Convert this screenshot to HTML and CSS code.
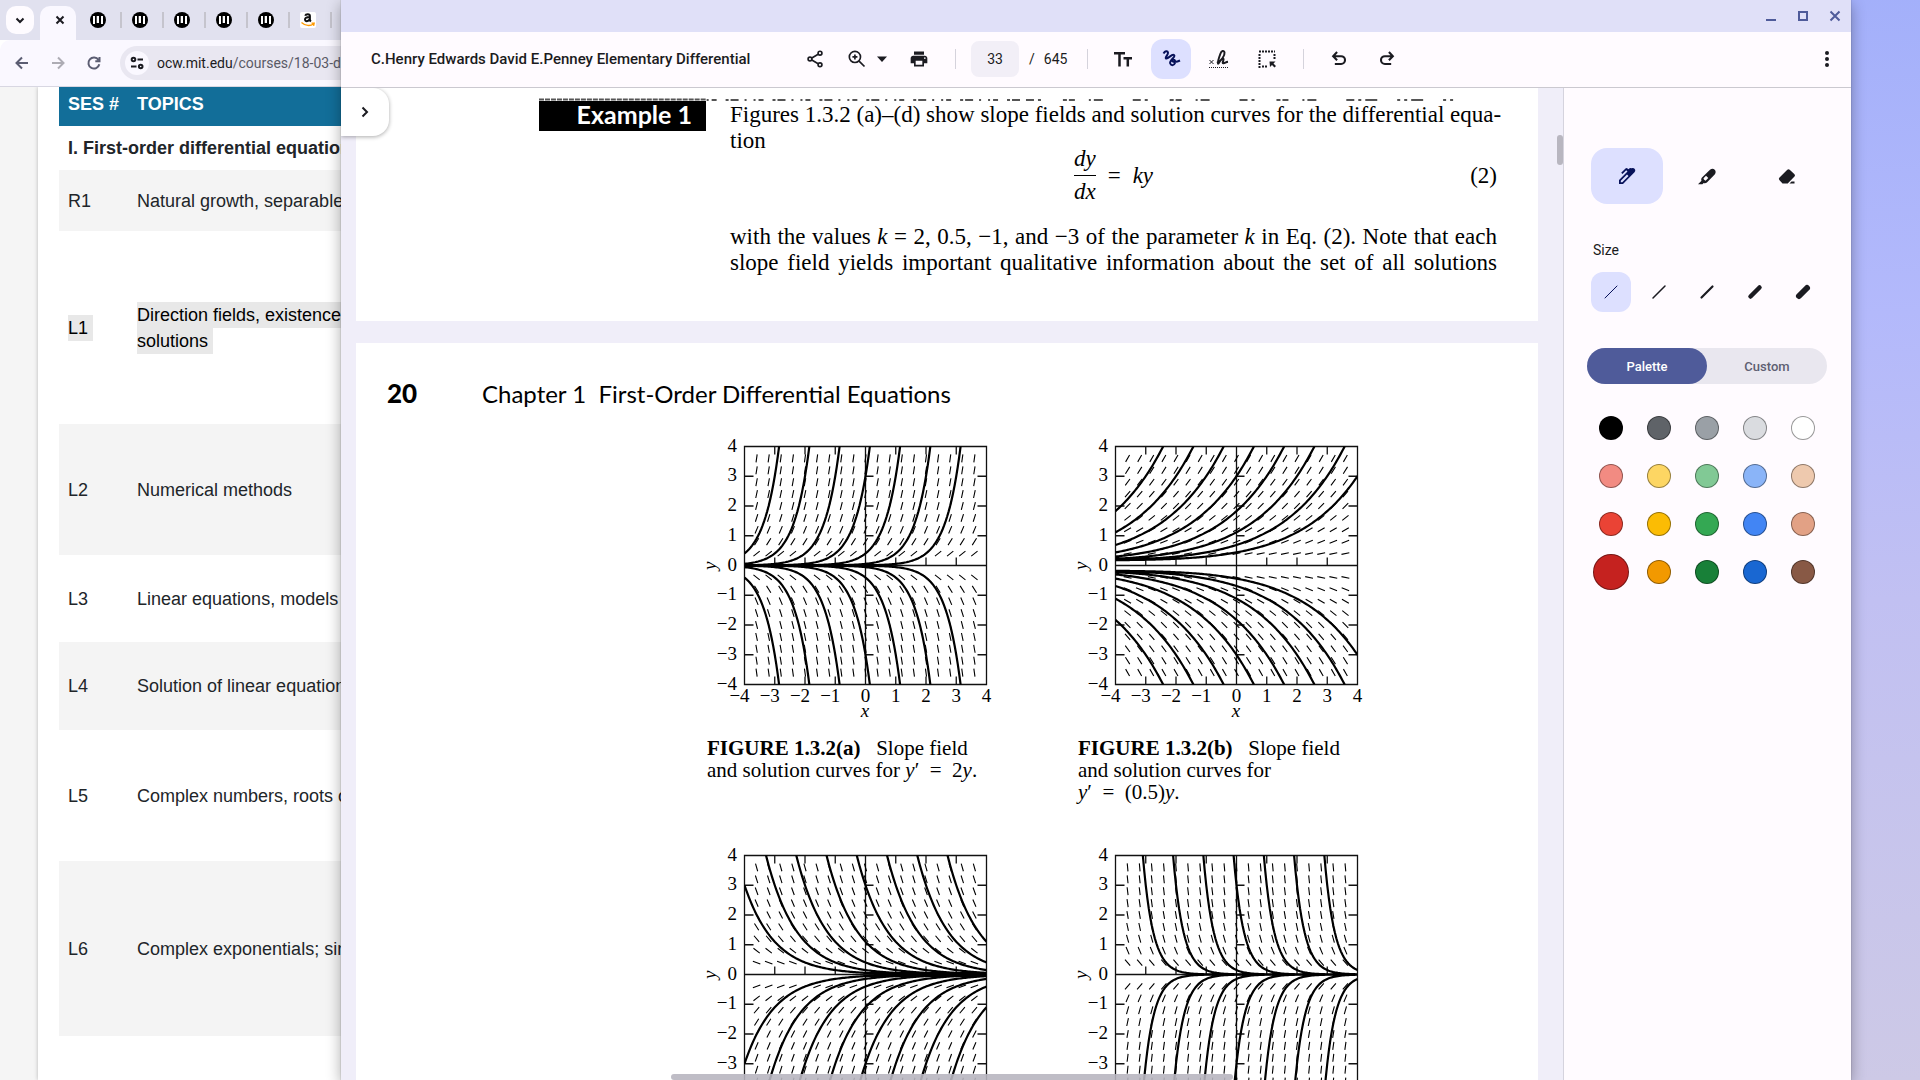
FILE: index.html
```html
<!DOCTYPE html>
<html lang="en">
<head>
<meta charset="utf-8">
<title>Desktop</title>
<link rel="stylesheet" href="styles.css">
</head>
<body>
<svg class="defs" aria-hidden="true">
  <symbol id="mit" viewBox="0 0 16 16"><circle cx="8" cy="8" r="8"/><path fill="#fff" d="M3 4h2v8H3zM6 4h1v7H6zM7 4h2v7H7zM11 4h2v8h-2z"/><path d="M6 4h.7v8H6zM9 4h.7v8H9z"/></symbol>
  <symbol id="amazon" viewBox="0 0 16 16"><rect width="16" height="16" rx="2" fill="#fff"/><path fill="none" stroke="#111" stroke-width="2" d="M5.200 3.700C5.800 1.800 9.900 1.600 9.900 4v3.500c0 .9.400 1.400 1 1.900M9.800 5.100C6.700 5.100 5 6 5 7.600c0 2 3.200 2.300 4.800-.6"/><path fill="none" stroke="#f90" stroke-width="1.300" d="M1.500 10.500c4 3.700 9 3.700 12 1.400M11.500 11.200h2.700l-.6 2.600"/></symbol>
</svg>
<div class="desktop">
  <section class="browser" aria-label="Browser">
    <div class="tabs">
      <button class="tab-search" aria-label="Search tabs"><svg viewBox="0 0 16 16"><path class="line" d="M4.500 6.500 8 10l3.500-3.500"/></svg></button>
      <div class="tab-active"><button aria-label="Close tab"><svg viewBox="0 0 16 16"><path class="line" d="m4.500 4.500 7 7m0-7-7 7"/></svg></button></div>
      <button class="tab" aria-label="MIT tab"><svg><use href="#mit"/></svg></button>
      <button class="tab" aria-label="MIT tab"><svg><use href="#mit"/></svg></button>
      <button class="tab" aria-label="MIT tab"><svg><use href="#mit"/></svg></button>
      <button class="tab" aria-label="MIT tab"><svg><use href="#mit"/></svg></button>
      <button class="tab" aria-label="MIT tab"><svg><use href="#mit"/></svg></button>
      <button class="tab" aria-label="Amazon tab"><svg><use href="#amazon"/></svg></button>
    </div>
    <div class="nav">
      <button aria-label="Back"><svg viewBox="0 0 16 16"><path class="line" d="M14 8H3M8 2.500 2.500 8 8 13.500"/></svg></button>
      <button aria-label="Forward" class="off"><svg viewBox="0 0 16 16"><path class="line" d="M2 8h11M8 2.500 13.500 8 8 13.500"/></svg></button>
      <button aria-label="Reload"><svg viewBox="0 0 16 16"><path class="line" d="M13.300 9.300A5.500 5.500 0 1 1 12.500 5M13.500 2v4.200H9.300"/></svg></button>
      <div class="omnibox">
        <span class="site"><svg viewBox="0 0 16 16"><path class="line" d="M8.500 4.500H14M2 11.500h5.500"/><circle class="line" cx="4.500" cy="4.500" r="1.800"/><circle class="line" cx="11.700" cy="11.500" r="1.800"/></svg></span>
        <span class="url">ocw.mit.edu<span>/courses/18-03-differential-equations</span></span>
      </div>
    </div>
    <div class="web">
      <div class="card">
        <table class="syllabus">
          <thead><tr><th scope="col">SES #</th><th scope="col">TOPICS</th></tr></thead>
          <tbody>
            <tr class="h-section"><th colspan="2" scope="colgroup">I. First-order differential equations</th></tr>
            <tr class="h-60 alt"><td>R1</td><td>Natural growth, separable equations</td></tr>
            <tr class="h-193"><td><span class="sel">L1</span></td><td><span class="sel">Direction fields, existence and uniqueness of</span><br><span class="sel">solutions</span></td></tr>
            <tr class="h-131 alt"><td>L2</td><td>Numerical methods</td></tr>
            <tr class="h-87"><td>L3</td><td>Linear equations, models</td></tr>
            <tr class="h-88 alt"><td>L4</td><td>Solution of linear equations</td></tr>
            <tr class="h-131"><td>L5</td><td>Complex numbers, roots of unity</td></tr>
            <tr class="h-175 alt"><td>L6</td><td>Complex exponentials; sinusoids</td></tr>
          </tbody>
        </table>
      </div>
    </div>
  </section>

  <section class="reader" aria-label="Document viewer">
    <header class="titlebar">
      <button aria-label="Minimize"><svg viewBox="0 0 12 12"><path d="M1 10h10"/></svg></button>
      <button aria-label="Maximize"><svg viewBox="0 0 12 12"><path d="M2 2h8v8H2z"/></svg></button>
      <button aria-label="Close"><svg viewBox="0 0 12 12"><path d="m1.500 1.500 9 9m0-9-9 9"/></svg></button>
    </header>
    <div class="toolbar">
      <h1>C.Henry Edwards David E.Penney Elementary Differential</h1>
      <button class="tool" aria-label="Share"><svg viewBox="0 0 24 24"><g class="s2"><circle cx="18" cy="5" r="2.300"/><circle cx="6" cy="12" r="2.300"/><circle cx="18" cy="19" r="2.300"/><path d="m8.200 10.800 7.600-4.500M8.200 13.200l7.600 4.500"/></g></svg></button>
      <button class="tool zoom" aria-label="Zoom"><svg viewBox="0 0 24 24"><g class="s2"><circle cx="9.500" cy="9.500" r="6.700"/><path d="m14.500 14.500 6.500 6.500M9.500 6.500v6M6.500 9.500h6"/></g></svg><svg viewBox="0 0 20 20"><path d="M5 7.500h10l-5 5.500z"/></svg></button>
      <button class="tool" aria-label="Print"><svg viewBox="0 0 24 24"><path d="M19 8H5c-1.660 0-3 1.340-3 3v6h4v4h12v-4h4v-6c0-1.660-1.340-3-3-3zm-3 11H8v-5h8v5zm3-7c-.55 0-1-.45-1-1s.45-1 1-1 1 .45 1 1-.45 1-1 1zm-1-9H6v4h12V3z"/></svg></button>
      <i class="sep"></i>
      <input class="page-no" aria-label="Page number" value="33"><span class="slash">/</span><span class="count">645</span>
      <i class="sep"></i>
      <div class="group">
        <button class="tool" aria-label="Text"><svg viewBox="0 0 20 20"><path class="s3" d="M1 4.200h11M6.500 4v13.500M10.500 9.200H19M14.800 9v8.500"/></svg></button>
        <button class="tool on" aria-label="Draw"><svg viewBox="0 0 20 20"><path class="s2" d="M2.500 4.500C4 2 6.500 1.500 7 3.500S3 9.500 5.500 9.500c2.200 0 5.500-5 7.500-3.500 2.200 1.800-5 5.500-3.800 8.500.8 2 3.800 2.500 4.800-.5.800-2.500-.5-3.500-2-3-1.500.6-.5 2.200 1.500 2 2-.2 3.500-.5 5.500-1.500"/></svg></button>
        <button class="tool" aria-label="Sign"><svg viewBox="0 0 20 20"><path class="s1" d="m.5 11 4 4m0-4-4 4"/><path class="s2" d="M8 14c4-2 8-7 7.500-10.500C15 1 12.500 1.800 11.500 4.500 10 8.500 8.500 13 9 14.500c.5 1 3-5.500 5-5 1.800.6-1.500 4.500.2 4.800 1.500.3 2.500-1.200 4.800-1.500"/><path class="dots" d="M0 18.500h20"/></svg></button>
        <button class="tool" aria-label="Select area"><svg viewBox="0 0 20 20"><path class="dots2" d="M2 2.500h16M2.500 5v14M17.500 5v5M5 17.500h6"/><path d="M12.500 12.500h6l-2 2 2.500 2.500-1.500 1.500-2.500-2.500-2 2z"/></svg></button>
      </div>
      <i class="sep"></i>
      <div class="group">
        <button class="tool" aria-label="Undo"><svg viewBox="0 0 24 24"><path class="s3" d="M7 18h7.500a4.700 4.700 0 0 0 0-9.400H5M9.700 3.700 5 8.600l4.700 4.900"/></svg></button>
        <button class="tool" aria-label="Redo"><svg viewBox="0 0 24 24"><path class="s3" d="M17 18H9.500a4.700 4.700 0 0 1 0-9.400H19M14.300 3.700 19 8.600l-4.700 4.900"/></svg></button>
      </div>
      <button class="tool more" aria-label="More options"><svg viewBox="0 0 20 20"><circle cx="10" cy="4" r="2"/><circle cx="10" cy="10" r="2"/><circle cx="10" cy="16" r="2"/></svg></button>
    </div>
    <div class="body">
      <main class="viewer">
        <button class="expand" aria-label="Show thumbnails"><svg viewBox="0 0 16 16"><path class="s2" d="m5.500 3.500 4.500 4.500-4.500 4.500"/></svg></button>
        <article class="sheet first">
          <svg class="torn" viewBox="0 0 960 3" preserveAspectRatio="none" aria-hidden="true"><path d="M0 1.500h168" stroke-dasharray="5 1"/><path d="M168 2h320" stroke-dasharray="2 3 5 9 3 2 8 6 2 7"/><path d="M488 2h340" stroke-dasharray="8 4 3 22 4 2 6 14 2 3 9 30"/><path d="M828 2h88" stroke-dasharray="12 20 3 4 3 4"/></svg>
          <div class="example">
            <h2>Example 1</h2>
            <div class="prose">
              <p>Figures 1.3.2 (a)–(d) show slope fields and solution curves for the differential equa-</p>
              <p class="last">tion</p>
              <div class="equation">
                <span></span>
                <span class="formula"><span class="frac"><i>dy</i><i>dx</i></span> = <i>ky</i></span>
                <span class="num">(2)</span>
              </div>
              <p>with the values <i>k</i> = 2, 0.5, −1, and −3 of the parameter <i>k</i> in Eq. (2). Note that each</p>
              <p>slope field yields important qualitative information about the set of all solutions</p>
            </div>
          </div>
        </article>
        <article class="sheet second">
          <div class="running"><b>20</b><span>Chapter 1&nbsp; First-Order Differential Equations</span></div>
          <div class="figures">
            <figure><svg class="plot" data-k="2" data-from="-3" data-to="3" data-floor="0" role="img" aria-label="Slope field a"></svg>
              <figcaption><b>FIGURE 1.3.2(a)</b>&ensp; Slope field<br>and solution curves for <i>y</i>′ &nbsp;=&nbsp; 2<i>y</i>.</figcaption></figure>
            <figure><svg class="plot" data-k="0.5" data-from="-3" data-to="4" data-floor="0.17" role="img" aria-label="Slope field b"></svg>
              <figcaption><b>FIGURE 1.3.2(b)</b>&ensp; Slope field<br>and solution curves for<br><i>y</i>′ &nbsp;=&nbsp; (0.5)<i>y</i>.</figcaption></figure>
            <figure><svg class="plot" data-k="-1" data-from="-4" data-to="3" data-floor="0" role="img" aria-label="Slope field c"></svg></figure>
            <figure><svg class="plot" data-k="-3" data-from="-3" data-to="3" data-floor="0" role="img" aria-label="Slope field d"></svg></figure>
          </div>
        </article>
        <i class="thumb-v"></i><i class="thumb-h"></i>
      </main>
      <aside class="panel">
        <div class="pens">
          <button class="on" aria-label="Pen"><svg viewBox="0 0 20 20"><path fill-rule="evenodd" d="M2 18v-4l8.500-8.500L9.200 4.200 5.500 8 4.200 6.700l4.300-4.300q1-.8 2 0l1 .9.700-.7q1-1 2-.3L16 2q1.500 0 2.200 1.800.4 1.400-.7 2.400L6 18zM3.800 16.200h1.500L11.500 10 10 8.500l-6.200 6.200z"/></svg></button>
          <button aria-label="Highlighter"><svg viewBox="0 0 20 20"><path fill-rule="evenodd" d="M1 18.300 4.500 14.800c-.5-1-.3-2.300.5-3.200l8-7.800q2.700-1.900 4.700 0 1.900 2.100 0 4.700l-7.800 8q-1.600 1.300-3.200.5l-1.300 1.300zM9 9.800 6.500 12.300q-.2 1 2 2.500l2.800-2.700z"/></svg></button>
          <button aria-label="Eraser"><svg viewBox="0 0 20 20"><path d="M5.500 17.500 2.300 14q-.8-1.200 0-2.200l8-8q1.200-.9 2.400 0l4.800 4.500q1 1.200 0 2.300l-6.800 6.900zM12.500 17.500l2-2H17.500v2z"/></svg></button>
        </div>
        <h2>Size</h2>
        <div class="sizes">
          <button class="on" aria-label="Extra thin"><svg viewBox="0 0 20 20"><path stroke-width="1" d="M4 16 16 4"/></svg></button>
          <button aria-label="Thin"><svg viewBox="0 0 20 20"><path stroke-width="1.500" d="M4 16 16 4"/></svg></button>
          <button aria-label="Medium"><svg viewBox="0 0 20 20"><path stroke-width="2.200" d="M4.500 15.500l11-11"/></svg></button>
          <button aria-label="Thick"><svg viewBox="0 0 20 20"><path stroke-width="4.500" d="M5.500 14.500l9-9"/></svg></button>
          <button aria-label="Extra thick"><svg viewBox="0 0 20 20"><path stroke-width="6" d="M6 14l8-8"/></svg></button>
        </div>
        <div class="segment"><button class="current">Palette</button><button>Custom</button></div>
        <div class="swatches">
          <button class="black" aria-label="Black"></button><button class="grey3" aria-label="Dark grey"></button><button class="grey2" aria-label="Grey"></button><button class="grey1" aria-label="Light grey"></button><button class="white" aria-label="White"></button>
          <button class="red1" aria-label="Light red"></button><button class="yellow1" aria-label="Light yellow"></button><button class="green1" aria-label="Light green"></button><button class="blue1" aria-label="Light blue"></button><button class="tan1" aria-label="Light tan"></button>
          <button class="red2" aria-label="Red"></button><button class="yellow2" aria-label="Yellow"></button><button class="green2" aria-label="Green"></button><button class="blue2" aria-label="Blue"></button><button class="tan2" aria-label="Tan"></button>
          <button class="red3 picked" aria-label="Dark red"></button><button class="yellow3" aria-label="Orange"></button><button class="green3" aria-label="Dark green"></button><button class="blue3" aria-label="Dark blue"></button><button class="tan3" aria-label="Brown"></button>
        </div>
      </aside>
    </div>
  </section>
</div>
<script src="plots.js"></script>
</body>
</html>
```
FILE: styles.css
```css
* { box-sizing: border-box; }
html, body { height: 100%; margin: 0; }
button { margin: 0; padding: 0; border: 0; background: none; color: inherit; font: inherit; display: flex; align-items: center; justify-content: center; }
h1, h2, p, figure { margin: 0; }
.defs { position: absolute; width: 0; height: 0; }
.desktop { position: relative; height: 100vh; overflow: hidden; background: linear-gradient(178deg, #cdc9e6 0%, #c1c0f2 42%, #b3b9fb 67%, #a0aefa 100%); background: linear-gradient(178deg, #a0aefa 0%, #b3b9fb 33%, #c1c0f2 58%, #cdc9e6 100%); font-family: Roboto, "Liberation Sans", sans-serif; color: #1b1b21; }

/* browser window */
.browser { position: absolute; left: 0; top: 0; bottom: 0; width: 50%; background: #fff; display: flex; flex-direction: column; }
.line { fill: none; stroke: currentColor; stroke-width: 2; }
.tabs { display: flex; align-items: center; height: 40px; padding-left: 6px; background: #e1e1ef; }
.tab-search { width: 28px; height: 28px; border-radius: 10px; background: #fefbff; }
.tab-search svg, .tab-active svg { width: 16px; height: 16px; }
.tab-active { width: 36px; height: 34px; margin: 6px 0 0 6px; padding: 6px 0 0 12px; border-radius: 10px 10px 0 0; background: #faf8ff; }
.tab { justify-content: flex-start; width: 42px; height: 16px; padding-left: 10px; border-right: 2px solid #c5c4cd; }
.tab svg { width: 16px; height: 16px; }
.tab-active + .tab { width: 46px; padding-left: 14px; }
.nav { display: flex; align-items: center; height: 47px; padding: 0 8px 0 12px; gap: 16px; background: #faf8ff; border-bottom: 1px solid #d8d7e2; color: #5b5d72; border-radius: 10px 0 0 0; }
.nav > button { width: 20px; height: 20px; }
.nav > button svg { width: 16px; height: 16px; }
.nav .off { color: #adacb4; }
.omnibox { flex: 1; display: flex; align-items: center; gap: 8px; height: 34px; padding-left: 5px; border-radius: 17px; background: #e9e7f1; overflow: hidden; }
.site { flex: none; display: flex; align-items: center; justify-content: center; width: 24px; height: 24px; border-radius: 50%; background: #faf8ff; color: #1b1b21; }
.site svg { width: 16px; height: 16px; }
.url { font-size: 14px; white-space: nowrap; color: #1b1b21; }
.url span { color: #5a5a66; }
.web { flex: 1; padding-left: 38px; background: #f5f5f5; overflow: hidden; }
.card { height: 100%; padding-left: 21px; background: #fff; box-shadow: 0 0 4px #0004; }
.syllabus { width: 100%; border-collapse: collapse; font: 18px/26px "Liberation Sans", Arial, sans-serif; color: #212529; }
.syllabus th { text-align: left; }
.syllabus td, .syllabus th { padding: 0 9px; white-space: nowrap; }
.syllabus thead tr { height: 39px; background: #126e99; color: #fff; }
.syllabus thead th { padding-bottom: 6px; }
.syllabus thead th:first-child { width: 69px; }
.alt { background: #f4f4f4; }
.h-section { height: 44px; }
.h-60 { height: 61px; }
.h-87 { height: 87px; }
.h-88 { height: 88px; }
.h-131 { height: 131px; }
.h-175 { height: 175px; }
.h-193 { height: 193px; }
.sel { display: inline-block; padding-right: 5px; background: #e8e8e8; color: #000; vertical-align: top; }

/* document window */
.reader { position: absolute; left: 341px; right: 69px; top: 0; bottom: 0; display: flex; flex-direction: column; background: #fffbff; box-shadow: 0 4px 14px #0005, 0 0 1px #0006; }
.titlebar { flex: none; display: flex; justify-content: flex-end; align-items: center; gap: 20px; height: 32px; padding-right: 10px; background: #e0e0f8; color: #4f5b9a; }
.titlebar svg { width: 12px; height: 12px; fill: none; stroke: currentColor; stroke-width: 2; }
.toolbar { flex: none; display: flex; align-items: center; height: 56px; padding: 0 4px 2px 30px; border-bottom: 1px solid #cbc9d0; }
.toolbar h1 { width: 424px; font-size: 15px; font-weight: 500; white-space: nowrap; }
.tool { width: 40px; height: 40px; border-radius: 12px; }
.tool svg { width: 20px; height: 20px; fill: currentColor; }
.s1, .s2, .s3 { fill: none; stroke: currentColor; stroke-width: 1; }
.s2 { stroke-width: 2; }
.s3 { stroke-width: 2.500; }
.dots { fill: none; stroke: currentColor; stroke-dasharray: 1 1; }
.dots2 { fill: none; stroke: currentColor; stroke-width: 2; stroke-dasharray: 2 1; }
.tool.zoom { width: 60px; margin: 0 0 0 4px; gap: 5px; }
.tool.on, .pens .on, .sizes .on { background: #dde0ff; color: #07125a; }
.sep { width: 1px; height: 20px; margin: 0 15px 0 16px; background: #d5d3dc; }
.page-no { width: 48px; height: 36px; padding: 0; border: 0; border-radius: 8px; background: #f2eff7; color: inherit; font: 14px Roboto, sans-serif; text-align: center; }
.slash { padding: 0 9px 0 10px; font-size: 14px; }
.count { width: 27px; font-size: 14px; }
.group { display: flex; gap: 8px; }
.more { margin-left: auto; }
.body { flex: 1; display: flex; min-height: 0; }
.viewer { position: relative; flex: 1; min-width: 0; overflow: hidden; padding: 0 25px 0 15px; background: #f0eef9; }
.expand { position: absolute; left: 0; top: 0; width: 48px; height: 48px; border-radius: 0 16px 16px 0; background: #fff; box-shadow: 0 1px 4px #0005; }
.expand svg { width: 16px; height: 16px; }
.sheet { background: #fff; color: #000; font-family: "Liberation Serif", "Times New Roman", serif; }
.first { height: 233px; padding: 10px 41px 0 183px; }
.torn { display: block; width: 960px; max-width: 100%; height: 3px; fill: none; stroke: #555; stroke-width: 2; }
.example { display: flex; gap: 24px; font-size: 23px; line-height: 26px; }
.example h2 { flex: none; width: 167px; height: 30px; padding-right: 14px; background: #000; color: #fff; font: bold 25px/27px Lato, sans-serif; text-align: right; }
.prose { flex: 1; min-width: 0; padding-top: 1px; }
.prose p { text-align: justify; text-align-last: justify; white-space: nowrap; }
.prose .last { text-align-last: left; }
.equation { display: grid; grid-template: 65px / 1fr auto 1fr; align-items: center; height: 81px; margin-top: -11px; }
.formula { display: flex; align-items: center; gap: 12px; }
.frac { display: grid; text-align: center; line-height: 32px; }
.frac i:first-child { border-bottom: 1px solid #000; }
.num { text-align: right; }
.second { height: 900px; margin-top: 22px; }
.running { display: flex; align-items: baseline; height: 66px; padding: 35px 0 0 31px; font: 24px/30px Lato, sans-serif; }
.running b { width: 95px; font-size: 26px; font-weight: 900; }
.figures { display: grid; grid-template-columns: 371px 371px; row-gap: 42px; padding: 27px 0 0 344px; }
.plot { display: block; width: 300px; height: 290px; }
.plot text { font-size: 19px; }
.plot .box { fill: none; stroke: #111; stroke-width: 1.300; }
.plot .curve { fill: none; stroke: #000; stroke-width: 2.200; }
.plot .field { fill: none; stroke: #000; stroke-width: 1.100; }
figcaption { min-height: 66px; margin: 11px 0 0 7px; font-size: 21px; line-height: 22px; white-space: nowrap; }
.thumb-v { position: absolute; right: 0; top: 47px; width: 6px; height: 30px; border-radius: 3px; background: #b8b6c0; }
.thumb-h { position: absolute; left: 27%; right: 27%; bottom: 0; height: 6px; border-radius: 3px; background: #b8b6c0e6; }

/* drawing options */
.panel { flex: none; width: 288px; padding: 60px 24px 0 23px; border-left: 1px solid #d5d3de; background: #fffbff; }
.pens, .sizes { display: flex; gap: 8px; padding-left: 4px; }
.pens button { width: 72px; height: 56px; border-radius: 16px; }
.pens svg, .sizes svg { width: 20px; height: 20px; fill: currentColor; }
.panel h2 { margin: 36px 6px 12px; font-size: 14px; line-height: 20px; font-weight: 400; }
.sizes button { width: 40px; height: 40px; border-radius: 12px; }
.sizes path { stroke: currentColor; stroke-linecap: round; }
.segment { display: flex; height: 36px; margin: 36px 0 26px; border-radius: 18px; background: #e9e7ef; font-size: 13px; font-weight: 500; color: #5e5f72; }
.segment button { flex: 1; border-radius: 18px; }
.segment .current { background: #4f5b9a; color: #fff; }
.swatches { display: grid; grid-template-columns: repeat(5, 48px); grid-auto-rows: 48px; place-items: center; margin-top: -6px; }
.swatches button { width: 24px; height: 24px; border-radius: 50%; border: 1px solid #0006; }
.swatches .picked { width: 36px; height: 36px; }
.black { background: #000; } .grey3 { background: #5f6368; } .grey2 { background: #9aa0a6; } .grey1 { background: #dadce0; } .white { background: #fff; }
.red1 { background: #f28b82; } .yellow1 { background: #fdd663; } .green1 { background: #81c995; } .blue1 { background: #8ab4f8; } .tan1 { background: #eec9ae; }
.red2 { background: #ea4335; } .yellow2 { background: #fbbc04; } .green2 { background: #34a853; } .blue2 { background: #4285f4; } .tan2 { background: #e2a185; }
.red3 { background: #c5221f; } .yellow3 { background: #f29900; } .green3 { background: #188038; } .blue3 { background: #1967d2; } .tan3 { background: #885945; }
```
FILE: plots.js
```js
// Draws y' = ky on [-4, 4] x [-4, 4]: axes, slope marks and the curves y = ±3e^{k(x-n)}.
const NS = "http://www.w3.org/2000/svg";
const UX = 30.25, UY = 29.75, LEFT = 44.5, TOP = 10.5;
const px = x => LEFT + (x + 4) * UX;
const py = y => TOP + (4 - y) * UY;

function add(parent, name, attrs, text) {
  const node = document.createElementNS(NS, name);
  for (const key in attrs) node.setAttribute(key, attrs[key]);
  if (text !== undefined) node.textContent = text;
  parent.appendChild(node);
  return node;
}

document.querySelectorAll(".plot").forEach((svg, index) => {
  const { k, from, to, floor } = Object.fromEntries(
    Object.entries(svg.dataset).map(([key, value]) => [key, Number(value)]));
  add(add(svg, "clipPath", { id: "frame" + index }), "rect",
    { x: LEFT, y: TOP, width: 8 * UX, height: 8 * UY });

  let axes = `M${px(-4)} ${py(4)}H${px(4)}V${py(-4)}H${px(-4)}ZM${px(-4)} ${py(0)}H${px(4)}M${px(0)} ${py(4)}V${py(-4)}`;
  for (let t = -3; t <= 3; t++) {
    if (t === 0) continue;
    axes += `M${px(t)} ${py(4)}v8M${px(t)} ${py(0)}v-8M${px(t)} ${py(-4)}v-8`;
    axes += `M${px(-4)} ${py(t)}h9M${px(0)} ${py(t)}h8M${px(4)} ${py(t)}h-9`;
  }
  add(svg, "path", { class: "box", d: axes });

  let marks = "";
  for (let i = -9; i <= 9; i++) for (let j = -9; j <= 9; j++) {
    if (j === 0) continue;
    const dx = UX, dy = -k * j * 0.4 * UY, s = 4 / Math.hypot(dx, dy);
    const x = px(i * 0.4), y = py(j * 0.4);
    marks += `M${(x - dx * s).toFixed(2)} ${(y - dy * s).toFixed(2)}L${(x + dx * s).toFixed(2)} ${(y + dy * s).toFixed(2)}`;
  }
  add(svg, "path", { class: "field", d: marks });

  let curves = "";
  for (let n = from; n <= to; n++) for (const sign of [1, -1]) {
    let cmd = "M";
    for (let x = -4; x <= 4.001; x += 0.05) {
      const y = Math.hypot(3 * Math.exp(k * (x - n)), floor);
      if (y > 5) continue;
      curves += `${cmd}${px(x).toFixed(2)} ${py(sign * y).toFixed(2)}`;
      cmd = "L";
    }
  }
  add(svg, "path", { class: "curve", d: curves, "clip-path": `url(#frame${index})` });

  for (let t = -4; t <= 4; t++) {
    const label = t < 0 ? "−" + -t : String(t);
    add(svg, "text", { x: 37, y: py(t) + 5, "text-anchor": "end" }, label);
    add(svg, "text", { x: px(t) - (t < 0 ? 5 : 0), y: 266, "text-anchor": "middle" }, label);
  }
  add(svg, "text", { x: 165, y: 281, "text-anchor": "middle", "font-style": "italic" }, "x");
  add(svg, "text", { x: 0, y: 0, transform: "translate(16 134) rotate(-90)", "font-style": "italic" }, "y");
});
```
